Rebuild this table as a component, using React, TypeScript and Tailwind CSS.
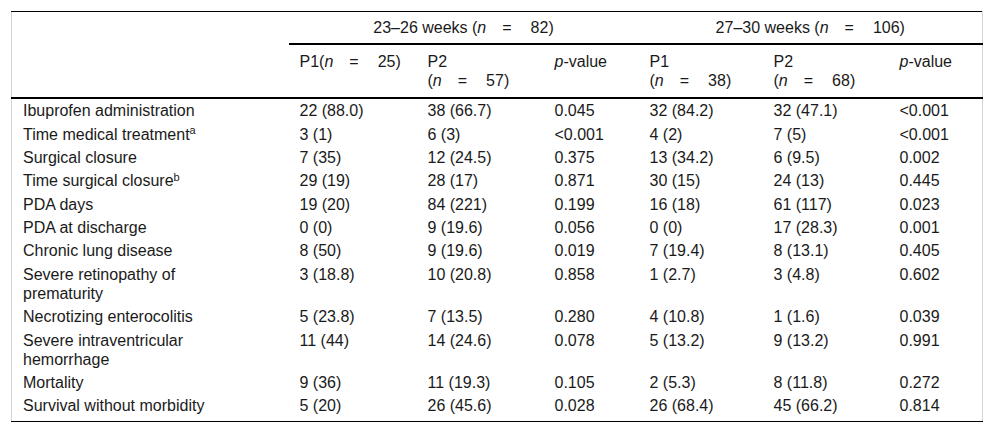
const rows: Array<{ label: React.ReactNode; cells: string[] }> = [
  { label: "Ibuprofen administration", cells: ["22 (88.0)", "38 (66.7)", "0.045", "32 (84.2)", "32 (47.1)", "<0.001"] },
  {
    label: (
      <>
        Time medical treatment<sup className="text-[11px] leading-none">a</sup>
      </>
    ),
    cells: ["3 (1)", "6 (3)", "<0.001", "4 (2)", "7 (5)", "<0.001"],
  },
  { label: "Surgical closure", cells: ["7 (35)", "12 (24.5)", "0.375", "13 (34.2)", "6 (9.5)", "0.002"] },
  {
    label: (
      <>
        Time surgical closure<sup className="text-[11px] leading-none">b</sup>
      </>
    ),
    cells: ["29 (19)", "28 (17)", "0.871", "30 (15)", "24 (13)", "0.445"],
  },
  { label: "PDA days", cells: ["19 (20)", "84 (221)", "0.199", "16 (18)", "61 (117)", "0.023"] },
  { label: "PDA at discharge", cells: ["0 (0)", "9 (19.6)", "0.056", "0 (0)", "17 (28.3)", "0.001"] },
  { label: "Chronic lung disease", cells: ["8 (50)", "9 (19.6)", "0.019", "7 (19.4)", "8 (13.1)", "0.405"] },
  {
    label: (
      <>
        Severe retinopathy of
        <br />
        prematurity
      </>
    ),
    cells: ["3 (18.8)", "10 (20.8)", "0.858", "1 (2.7)", "3 (4.8)", "0.602"],
  },
  { label: "Necrotizing enterocolitis", cells: ["5 (23.8)", "7 (13.5)", "0.280", "4 (10.8)", "1 (1.6)", "0.039"] },
  {
    label: (
      <>
        Severe intraventricular
        <br />
        hemorrhage
      </>
    ),
    cells: ["11 (44)", "14 (24.6)", "0.078", "5 (13.2)", "9 (13.2)", "0.991"],
  },
  { label: "Mortality", cells: ["9 (36)", "11 (19.3)", "0.105", "2 (5.3)", "8 (11.8)", "0.272"] },
  { label: "Survival without morbidity", cells: ["5 (20)", "26 (45.6)", "0.028", "26 (68.4)", "45 (66.2)", "0.814"] },
];

// "(n = 25)" with the wide spacing around the equals sign
const N = ({ v }: { v: string }) => (
  <>
    (<i>n</i>
    <span className="ml-[16px] mr-[19px]">=</span>
    {v})
  </>
);

const PValue = () => (
  <>
    <i>p</i>-value
  </>
);

const App = () => {
  const th = "px-[11px] py-[7px] text-left font-normal align-top";
  return (
    <div
      className="w-[992px] h-[434px] bg-white pt-[11px] px-[11px] text-[16px] leading-[19px] text-[#1a1a1a]"
      style={{ fontFamily: '"Liberation Sans", Arial, sans-serif' }}
    >
      <table className="w-[971px] table-fixed border-collapse border-t border-t-black border-b border-b-black border-x border-x-[#d4d4d4]">
        <colgroup>
          <col className="w-[277px]" />
          <col className="w-[128px]" />
          <col className="w-[127px]" />
          <col className="w-[95px]" />
          <col className="w-[124px]" />
          <col className="w-[126px]" />
          <col className="w-[94px]" />
        </colgroup>
        <thead>
          <tr>
            <th className="py-[6px]" />
            <th colSpan={3} className="py-[6px] font-normal text-center border-b-2 border-b-black">
              23–26 weeks <N v="82" />
            </th>
            <th colSpan={3} className="py-[6px] font-normal text-center border-b-2 border-b-black">
              27–30 weeks <N v="106" />
            </th>
          </tr>
          <tr className="border-b-2 border-b-black">
            <th className={th} />
            <th className={`${th} whitespace-nowrap`}>
              P1<N v="25" />
            </th>
            <th className={`${th} whitespace-nowrap`}>
              P2
              <br />
              <N v="57" />
            </th>
            <th className={th}>
              <PValue />
            </th>
            <th className={`${th} whitespace-nowrap`}>
              P1
              <br />
              <N v="38" />
            </th>
            <th className={`${th} whitespace-nowrap`}>
              P2
              <br />
              <N v="68" />
            </th>
            <th className={th}>
              <PValue />
            </th>
          </tr>
        </thead>
        <tbody>
          {rows.map((row, i) => {
            const pad = i === rows.length - 1 ? "pt-[2.2px] pb-[6px]" : "py-[2.2px]";
            return (
              <tr key={i}>
                <td className={`px-[11px] align-top whitespace-nowrap ${pad}`}>{row.label}</td>
                {row.cells.map((c, j) => (
                  <td key={j} className={`px-[11px] align-top whitespace-nowrap ${pad}`}>
                    {c}
                  </td>
                ))}
              </tr>
            );
          })}
        </tbody>
      </table>
    </div>
  );
};

export default App;
